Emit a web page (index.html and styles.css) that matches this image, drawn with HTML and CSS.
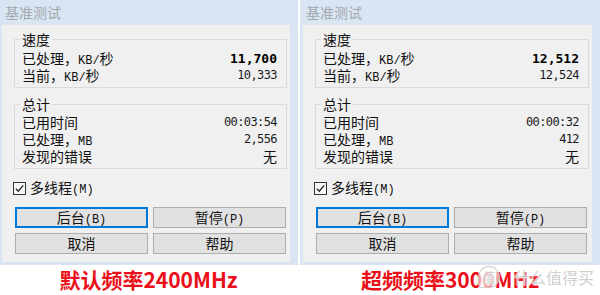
FILE: index.html
```html
<!DOCTYPE html>
<html lang="zh-CN">
<head>
  <meta charset="UTF-8">
  <title>基准测试对比</title>
  <link rel="stylesheet" href="styles.css">
</head>
<body>
  <div class="shots">
    <!-- 默认频率 -->
    <section class="shot shot-left">
      <div class="dialog">
        <div class="titlebar">基准测试</div>
        <div class="dialog-body">
          <fieldset class="group">
            <legend>速度</legend>
            <div class="row"><span>已处理，<span class="en">KB/</span>秒</span><span class="num bold">11,700</span></div>
            <div class="row"><span>当前，<span class="en">KB/</span>秒</span><span class="num">10,333</span></div>
          </fieldset>
          <fieldset class="group group-total">
            <legend>总计</legend>
            <div class="row"><span>已用时间</span><span class="num">00:03:54</span></div>
            <div class="row"><span>已处理，<span class="en">MB</span></span><span class="num">2,556</span></div>
            <div class="row"><span>发现的错误</span><span>无</span></div>
          </fieldset>
          <label class="check">
            <svg width="13" height="13" viewBox="0 0 13 13"><rect x="0.5" y="0.5" width="12" height="12" fill="#f7f7f7" stroke="#333"/><path d="M2.8 6.6 L5.3 9.2 L10.2 3.4" fill="none" stroke="#222" stroke-width="1.3"/></svg>
            <span>多线程<span class="en">(M)</span></span>
          </label>
          <div class="buttons">
            <button class="default">后台<span class="en">(B)</span></button>
            <button>暂停<span class="en">(P)</span></button>
            <button>取消</button>
            <button>帮助</button>
          </div>
        </div>
      </div>
      <div class="caption">默认频率2400MHz</div>
    </section>

    <!-- 超频 -->
    <section class="shot shot-right">
      <div class="dialog">
        <div class="titlebar">基准测试</div>
        <div class="dialog-body">
          <fieldset class="group">
            <legend>速度</legend>
            <div class="row"><span>已处理，<span class="en">KB/</span>秒</span><span class="num bold">12,512</span></div>
            <div class="row"><span>当前，<span class="en">KB/</span>秒</span><span class="num">12,524</span></div>
          </fieldset>
          <fieldset class="group group-total">
            <legend>总计</legend>
            <div class="row"><span>已用时间</span><span class="num">00:00:32</span></div>
            <div class="row"><span>已处理，<span class="en">MB</span></span><span class="num">412</span></div>
            <div class="row"><span>发现的错误</span><span>无</span></div>
          </fieldset>
          <label class="check">
            <svg width="13" height="13" viewBox="0 0 13 13"><rect x="0.5" y="0.5" width="12" height="12" fill="#f7f7f7" stroke="#333"/><path d="M2.8 6.6 L5.3 9.2 L10.2 3.4" fill="none" stroke="#222" stroke-width="1.3"/></svg>
            <span>多线程<span class="en">(M)</span></span>
          </label>
          <div class="buttons">
            <button class="default">后台<span class="en">(B)</span></button>
            <button>暂停<span class="en">(P)</span></button>
            <button>取消</button>
            <button>帮助</button>
          </div>
        </div>
      </div>
      <div class="caption">
        超频频率3000MHz
        <span class="watermark"><span class="wm-logo">值</span>什么值得买</span>
      </div>
    </section>
  </div>
</body>
</html>
```

FILE: styles.css
```css
body {
  margin: 0;
  width: 600px;
  height: 295px;
  overflow: hidden;
  background: #fff;
  font-family: "Noto Sans CJK SC", sans-serif;
  font-size: 14px;
  color: #111;
}
.shots {
  display: flex;
  gap: 2px;
}
.shot-left {
  width: 299px;
  margin-left: -1px;
}
.shot-right {
  width: 300px;
}
.dialog {
  background: #d9e5f2;
  padding: 0 8px 3px 3px;
}
.titlebar {
  height: 25px;
  line-height: 25px;
  margin-left: -3px;
  padding-left: 6px;
  color: #a3a8ae;
  font-size: 14px;
}
.dialog-body {
  background: #f0f0f0;
  padding: 6px 3px 8px 12px;
}
.group {
  margin: 0;
  padding: 3px 9px 3px 7px;
  border: 1px solid #dadada;
}
.group-total {
  margin-top: 8px;
  padding-top: 2px;
}
.group legend {
  padding: 0 2px;
  margin-left: -2px;
  line-height: 16px;
}
.row {
  display: flex;
  justify-content: space-between;
  height: 17px;
  line-height: 17px;
}
.row > span {
  line-height: 17px;
}
.en {
  font-family: "Liberation Mono", monospace;
  font-size: 12px;
}
.num {
  font-family: "DejaVu Sans Mono", monospace;
  font-size: 12px;
  letter-spacing: -0.6px;
  color: #1a1a1a;
}
.num.bold {
  font-size: 13px;
  letter-spacing: 0;
  font-weight: bold;
  color: #000;
}
.check {
  display: flex;
  align-items: center;
  gap: 4px;
  height: 17px;
  line-height: 17px;
  margin: 11px 0 0 -1px;
}
.check svg {
  display: block;
}
.buttons {
  display: grid;
  grid-template-columns: 133px 133px;
  gap: 5px;
  margin: 10px 0 0 1px;
}
button {
  height: 21px;
  padding: 0;
  background: #e1e1e1;
  border: 1px solid #adadad;
  font-family: "Noto Sans CJK SC", sans-serif;
  font-size: 14px;
  line-height: 19px;
  color: #111;
}
button.default {
  border-color: #0078d7;
  box-shadow: inset 0 0 0 1px #0078d7;
}
.caption {
  position: relative;
  height: 29px;
  line-height: 29px;
  text-align: center;
  color: #ea0f18;
  font-size: 21px;
  font-weight: bold;
}
.watermark {
  position: absolute;
  left: 178px;
  top: 1px;
  display: flex;
  align-items: center;
  gap: 14px;
  font-size: 16px;
  font-weight: normal;
  line-height: 22px;
  color: rgba(195, 195, 195, 0.8);
  text-shadow: 0 0 2px #fff, 0 0 1px #fff;
}
.wm-logo {
  display: block;
  width: 20px;
  height: 20px;
  line-height: 20px;
  text-align: center;
  border: 1.5px solid rgba(195, 195, 195, 0.8);
  border-radius: 50% 50% 50% 4px;
  font-size: 13px;
  background: rgba(255, 255, 255, 0.6);
}
```
